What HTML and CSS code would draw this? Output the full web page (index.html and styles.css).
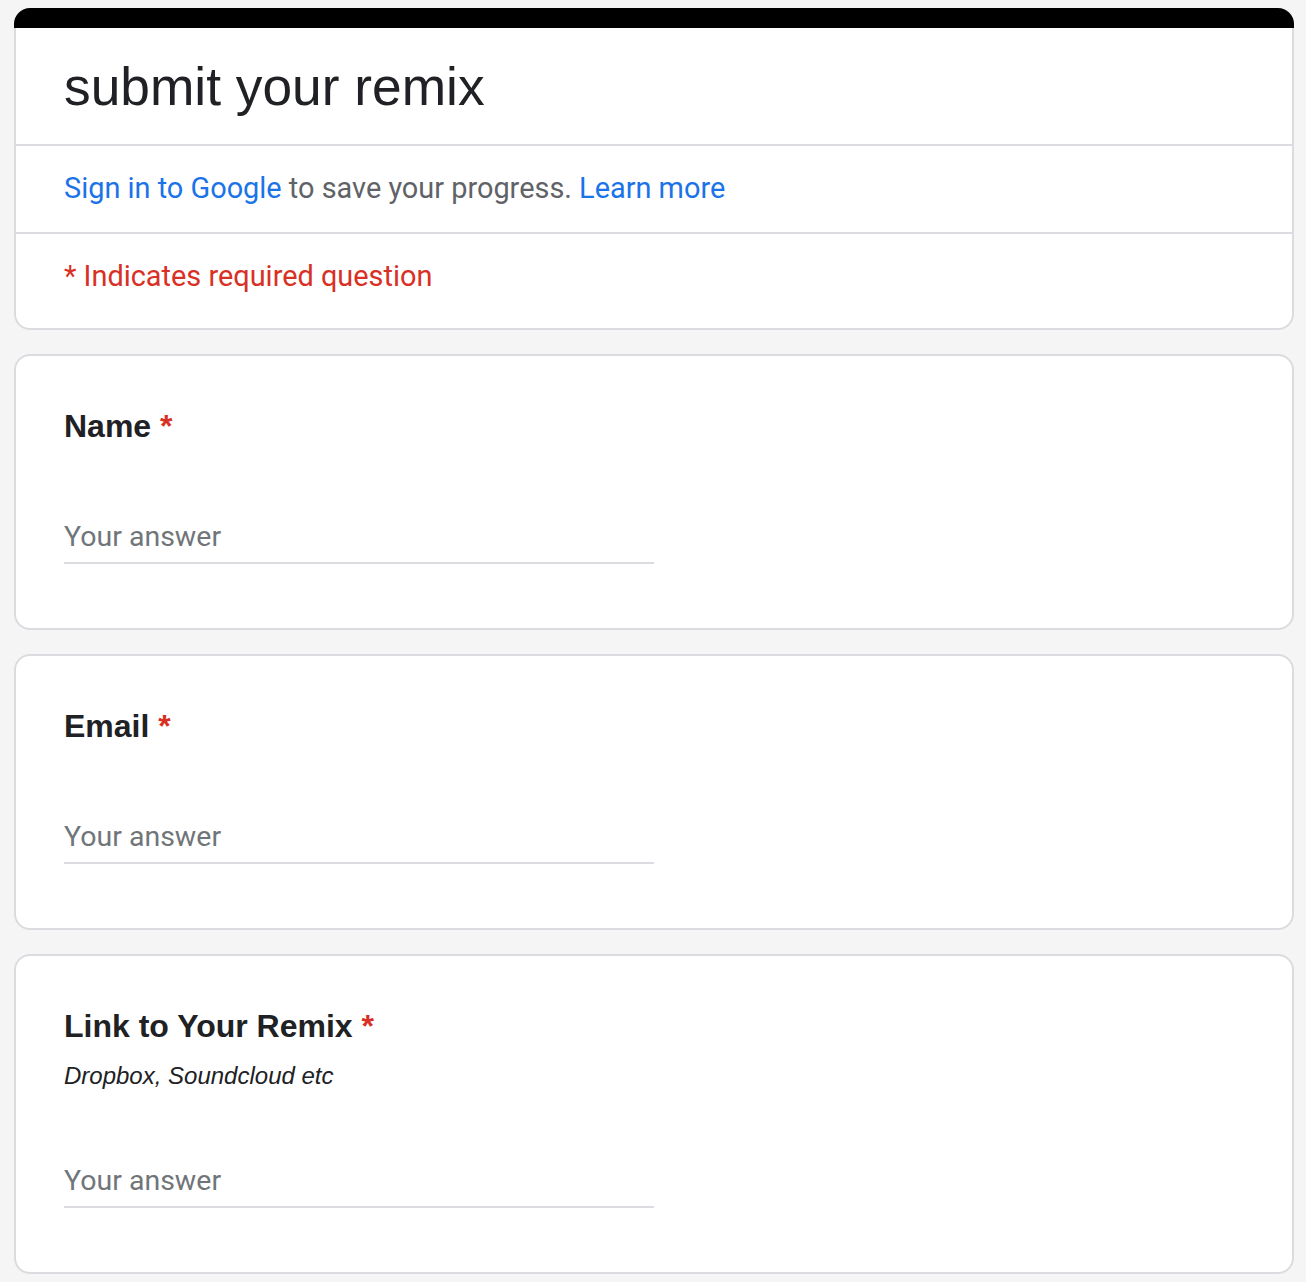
FILE: index.html
```html
<!DOCTYPE html>
<html lang="en">
<head>
<meta charset="utf-8">
<title>submit your remix</title>
<link rel="stylesheet" href="styles.css">
</head>
<body>
<div class="form">
  <div class="header-card">
    <div class="header-bar"></div>
    <div class="header-body">
      <div class="title-section">
        <h1 class="form-title">submit your remix</h1>
      </div>
      <div class="signin-section">
        <a class="link" href="#">Sign in to Google</a> to save your progress. <a class="link" href="#">Learn more</a>
      </div>
      <div class="required-section">* Indicates required question</div>
    </div>
  </div>

  <div class="question-card">
    <div class="q-title">Name <span class="req">*</span></div>
    <input class="answer" type="text" placeholder="Your answer">
  </div>

  <div class="question-card">
    <div class="q-title">Email <span class="req">*</span></div>
    <input class="answer" type="text" placeholder="Your answer">
  </div>

  <div class="question-card">
    <div class="q-title">Link to Your Remix <span class="req">*</span></div>
    <div class="q-desc">Dropbox, Soundcloud etc</div>
    <input class="answer" type="text" placeholder="Your answer">
  </div>
</div>
</body>
</html>
```

FILE: styles.css
```css
* {
  box-sizing: border-box;
}

html, body {
  margin: 0;
  padding: 0;
  background: #f5f5f5;
}

body {
  font-family: "Liberation Sans", Arial, sans-serif;
  color: #202124;
}

.form {
  width: 1280px;
  margin: 8px 0 0 14px;
  display: flex;
  flex-direction: column;
  gap: 24px;
}

.header-bar {
  height: 20px;
  background: #000;
  border-radius: 16px 16px 0 0;
}

.header-body {
  background: #fff;
  border: 2px solid #dadce0;
  border-top: none;
  border-radius: 0 0 16px 16px;
}

.title-section {
  padding: 27px 48px 25px;
}

.form-title {
  margin: 0;
  font-family: "Liberation Sans", Arial, sans-serif;
  font-weight: 400;
  font-size: 53.3px;
  line-height: 64px;
  color: #202124;
}

.signin-section {
  border-top: 2px solid #dadce0;
  padding: 22px 48px 24px;
  font-family: Roboto, "Noto Sans", sans-serif;
  font-size: 28.9px;
  line-height: 40px;
  color: #5f6368;
}

.link {
  color: #1a73e8;
  text-decoration: none;
}

.required-section {
  border-top: 2px solid #dadce0;
  padding: 22px 48px 32px;
  font-family: Roboto, "Noto Sans", sans-serif;
  font-size: 28.9px;
  line-height: 40px;
  color: #d93025;
}

.question-card {
  background: #fff;
  border: 2px solid #dadce0;
  border-radius: 16px;
  padding: 46px 48px 64px;
  display: flex;
  flex-direction: column;
  align-items: flex-start;
}

.q-title {
  font-family: "Liberation Sans", Arial, sans-serif;
  font-weight: 700;
  font-size: 32px;
  line-height: 48px;
  color: #202124;
}

.req {
  color: #d93025;
}

.q-desc {
  margin: 10px 0 2px;
  font-family: "Liberation Sans", Arial, sans-serif;
  font-style: italic;
  font-size: 24px;
  line-height: 32px;
  color: #202124;
}

.answer {
  display: block;
  width: 590px;
  height: 48px;
  margin: 66px 0 0;
  padding: 0 0 6px;
  border: none;
  border-bottom: 2px solid #dadce0;
  outline: none;
  background: transparent;
  font-family: Roboto, "Noto Sans", sans-serif;
  font-size: 28.5px;
  line-height: 40px;
  color: #202124;
}

.answer::placeholder {
  color: #70757a;
  opacity: 1;
}
```
